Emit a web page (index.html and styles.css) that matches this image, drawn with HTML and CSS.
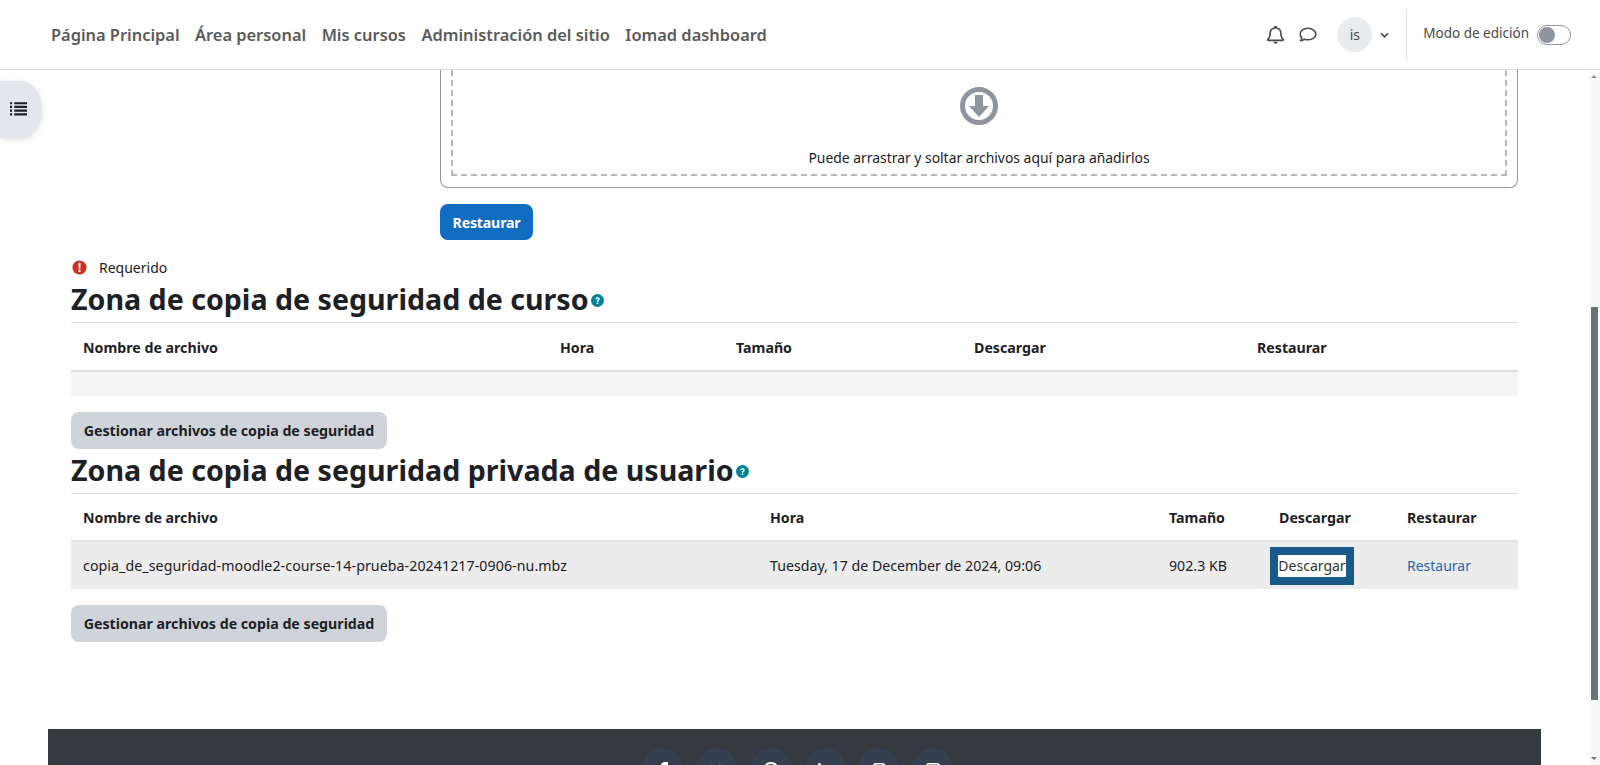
FILE: index.html
```html
<!DOCTYPE html>
<html lang="es">
<head>
    <meta charset="UTF-8">
    <meta name="viewport" content="width=device-width, initial-scale=1.0">
    <title>Restaurar curso</title>
    <link rel="stylesheet" href="styles.css">
</head>
<body>

    <header class="navbar">
        <nav class="primary-nav">
            <a href="#">Página Principal</a>
            <a href="#">Área personal</a>
            <a href="#">Mis cursos</a>
            <a href="#">Administración del sitio</a>
            <a href="#">Iomad dashboard</a>
        </nav>
        <div class="usernav">
            <svg class="nav-icon bell" viewBox="0 0 448 512"><path d="M224 40c-13 0-24 11-24 24v18C128 94 80 152 80 224c0 60-14 100-32 128-10 15-22 26-28 34-8 11-2 30 16 30h376c18 0 24-19 16-30-6-8-18-19-28-34-18-28-32-68-32-128 0-72-48-130-120-142V64c0-13-11-24-24-24z" fill="none" stroke="currentColor" stroke-width="44"/><path d="M168 448a56 56 0 0 0 112 0z" fill="currentColor"/></svg>
            <svg class="nav-icon chat" viewBox="0 0 512 512"><path d="M256 64C130 64 32 136 32 232c0 42 20 78 50 106-8 34-34 70-38 78 36-2 84-18 112-42 30 10 64 16 100 16 126 0 224-72 224-158S382 64 256 64z" fill="none" stroke="currentColor" stroke-width="44" stroke-linejoin="round"/></svg>
            <span class="avatar">is</span>
            <svg class="caret" viewBox="0 0 10 6"><path d="M1 1l4 4 4-4" fill="none" stroke="currentColor" stroke-width="1.8"/></svg>
            <span class="nav-divider"></span>
            <span class="edit-label">Modo de edición</span>
            <span class="switch"><span class="switch-knob"></span></span>
        </div>
    </header>

    <button class="drawer-toggle" aria-label="Índice">
        <svg viewBox="0 0 16 14"><path d="M0 1h2v2H0zM4 1h12v2H4zM0 4.500h2v2H0zM4 4.500h12v2H4zM0 8h2v2H0zM4 8h12v2H4zM0 11.500h2v2H0zM4 11.500h12v2H4z" fill="currentColor"/></svg>
    </button>

    <main class="page">
        <div class="filepicker-row">
            <div class="filepicker">
                <div class="dropzone">
                    <svg class="drop-icon" viewBox="0 0 40 40"><circle cx="20" cy="20" r="16.500" fill="none" stroke="currentColor" stroke-width="5"/><path d="M16 9h8v11h6L20 31 10 20h6z" fill="currentColor"/></svg>
                    <p>Puede arrastrar y soltar archivos aquí para añadirlos</p>
                </div>
            </div>
            <button class="btn btn-primary">Restaurar</button>
        </div>

        <div class="required-note">
            <svg class="req-icon" viewBox="0 0 16 16"><circle cx="8" cy="8" r="7.500" fill="currentColor"/><path d="M6.800 3h2.400l-.3 6.500H7.100zM6.900 10.500h2.200v2.300H6.900z" fill="#fff"/></svg>
            <span>Requerido</span>
        </div>

        <h2>Zona de copia de seguridad de curso<svg class="help" viewBox="0 0 16 16"><circle cx="8" cy="8" r="8" fill="currentColor"/><path d="M5.300 6.200C5.500 4.700 6.600 4 8.100 4c1.500 0 2.700.8 2.700 2.200 0 1.900-2 1.800-2 3.300H7.200c0-2.300 1.900-2.200 1.900-3.200 0-.5-.4-.9-1-.9s-1 .3-1.200 1zM7.100 10.500h1.800v1.700H7.100z" fill="#fff"/></svg></h2>
        <table class="backup-table course-zone">
            <thead>
                <tr><th>Nombre de archivo</th><th>Hora</th><th>Tamaño</th><th>Descargar</th><th>Restaurar</th></tr>
            </thead>
            <tbody>
                <tr class="empty-row"><td colspan="5"></td></tr>
            </tbody>
        </table>
        <button class="btn btn-secondary">Gestionar archivos de copia de seguridad</button>

        <h2>Zona de copia de seguridad privada de usuario<svg class="help" viewBox="0 0 16 16"><circle cx="8" cy="8" r="8" fill="currentColor"/><path d="M5.300 6.200C5.500 4.700 6.600 4 8.100 4c1.500 0 2.700.8 2.700 2.200 0 1.900-2 1.800-2 3.300H7.200c0-2.300 1.900-2.200 1.900-3.200 0-.5-.4-.9-1-.9s-1 .3-1.200 1zM7.100 10.500h1.800v1.700H7.100z" fill="#fff"/></svg></h2>
        <table class="backup-table user-zone">
            <thead>
                <tr><th>Nombre de archivo</th><th>Hora</th><th>Tamaño</th><th>Descargar</th><th>Restaurar</th></tr>
            </thead>
            <tbody>
                <tr>
                    <td class="file-name">copia_de_seguridad-moodle2-course-14-prueba-20241217-0906-nu.mbz</td>
                    <td>Tuesday, 17 de December de 2024, 09:06</td>
                    <td>902.3 KB</td>
                    <td><a href="#" class="focus-link">Descargar</a></td>
                    <td><a href="#" class="plain-link">Restaurar</a></td>
                </tr>
            </tbody>
        </table>
        <button class="btn btn-secondary">Gestionar archivos de copia de seguridad</button>
    </main>

    <footer class="site-footer">
        <span class="social"><svg viewBox="0 0 10 16"><path d="M3 16V9H0V6h3V4c0-3 2-4 4-4h3v3H8C7 3 6.500 3.500 6.500 4.500V6H10l-.5 3h-3v7z" fill="currentColor"/></svg></span>
        <span class="social"><svg viewBox="0 0 16 14"><path d="M16 2l-2 .6L15.500 1l-2 .8A3.300 3.300 0 0 0 8 4.500 9 9 0 0 1 1.200.8 3.300 3.300 0 0 0 2.200 5L.7 4.600c0 1.600 1.100 3 2.600 3.300l-1.500.1c.4 1.300 1.600 2.200 3 2.300A6.500 6.500 0 0 1 0 11.700 9.300 9.300 0 0 0 14.400 4z" fill="currentColor"/></svg></span>
        <span class="social"><svg viewBox="0 0 14 16"><path d="M7 0C3 0 0 2.500 0 6c0 2 1 3.500 2.500 4l.6-2C2.400 7.500 2.200 6.800 2.200 6c0-2.400 2-4 4.700-4 2.600 0 4.200 1.500 4.200 3.800 0 2.500-1.200 4.400-2.800 4.400-.9 0-1.600-.8-1.400-1.700l1-4H5.800L4 12l-.5 4h1.600L7 11.500c.5.600 1.300 1 2.200 1C12 12.500 14 9.500 14 6c0-3.500-3-6-7-6z" fill="currentColor"/></svg></span>
        <span class="social"><svg viewBox="0 0 14 14"><path d="M0 4.500h3V14H0zM1.500 0a1.700 1.700 0 1 1 0 3.400 1.700 1.700 0 0 1 0-3.400zM5 4.500h3V6c.6-1 1.700-1.700 3-1.700 2.300 0 3 1.500 3 4V14h-3V9c0-1.200-.3-2-1.400-2C8.400 7 8 8 8 9v5H5z" fill="currentColor"/></svg></span>
        <span class="social"><svg viewBox="0 0 14 14"><path d="M4 .8h6A3.200 3.200 0 0 1 13.200 4v6a3.200 3.200 0 0 1-3.200 3.200H4A3.200 3.200 0 0 1 .8 10V4A3.200 3.200 0 0 1 4 .8z" fill="none" stroke="currentColor" stroke-width="1.500"/></svg></span>
        <span class="social"><svg viewBox="0 0 14 14"><rect x=".8" y=".8" width="12.400" height="12.400" rx="2" fill="none" stroke="currentColor" stroke-width="1.500"/></svg></span>
    </footer>

    <div class="fake-scrollbar">
        <span class="arrow-up"></span>
        <span class="thumb"></span>
        <span class="arrow-down"></span>
    </div>

</body>
</html>
```

FILE: styles.css
```css
:root {
    --text: #1d2125;
    --nav-text: #5a5a5a;
    --primary: #0f6cbf;
    --secondary: #ced4da;
    --line: #dee2e6;
    --teal: #008196;
    --font-text: 'Noto Sans', 'Open Sans', sans-serif;
}

* { margin: 0; padding: 0; box-sizing: border-box; }

html, body {
    height: 100%;
    overflow: hidden;
}

body {
    position: relative;
    background: #fff;
    color: var(--text);
    font-family: var(--font-text);
    font-size: 14.2px;
    line-height: 21px;
}

a { text-decoration: none; }

/* barra superior */
.navbar {
    display: flex;
    align-items: center;
    justify-content: space-between;
    height: 70px;
    padding-left: 51px;
    padding-right: 29px;
    border-bottom: 1px solid #dcdcdc;
}

.primary-nav {
    display: flex;
    gap: 15.5px;
    font-size: 16.4px;
    font-weight: 600;
}

.primary-nav a { color: var(--nav-text); }

.usernav {
    display: flex;
    align-items: center;
    color: #4a4a4a;
}

.nav-icon {
    width: 17px;
    height: 19px;
    display: block;
}

.chat {
    margin-left: 15px;
    width: 18px;
    height: 18px;
}

.avatar {
    width: 35px;
    height: 35px;
    margin-left: 20px;
    border-radius: 50%;
    background: #e9ecef;
    text-align: center;
    line-height: 35px;
    font-size: 14px;
}

.caret {
    width: 9px;
    height: 6px;
    margin-left: 8px;
}

.nav-divider {
    width: 1px;
    height: 51px;
    margin-left: 17px;
    background: #dee2e6;
}

.edit-label {
    margin-left: 16px;
    font-size: 13.5px;
    position: relative;
    top: -1px;
}

.switch {
    width: 34px;
    height: 20px;
    margin-left: 8px;
    padding: 2px;
    border: 1px solid #8f959e;
    border-radius: 10px;
}

.switch-knob {
    display: block;
    width: 14px;
    height: 14px;
    border-radius: 50%;
    background: #8f959e;
    box-shadow: 0 0 0 1px #8f959e;
}

.drawer-toggle {
    position: absolute;
    top: 81px;
    left: 0;
    width: 42px;
    height: 57px;
    border: 0;
    border-radius: 0 50% 50% 0 / 0 50% 50% 0;
    background: #e3e6ea;
    box-shadow: 0 2px 6px rgba(0,0,0,0.12);
    color: #1d2125;
}

.drawer-toggle svg {
    display: block;
    width: 17px;
    height: 15px;
    margin-left: 10px;
    margin-top: -2px;
}

/* contenido */
.page {
    width: 1447px;
    margin-left: 71px;
}

.filepicker-row {
    padding-left: 369px;
    margin-bottom: 17px;
}

.filepicker {
    height: 118px;
    padding: 0 10px 11px;
    border: 1px solid #8f959e;
    border-top: 0;
    border-radius: 0 0 8px 8px;
}

.dropzone {
    height: 106px;
    border: 2px dashed #b8b8b8;
    border-top: 0;
    text-align: center;
}

.drop-icon {
    display: block;
    width: 40px;
    height: 40px;
    margin: 0 auto;
    position: relative;
    top: 16px;
    color: #8f959e;
}

.dropzone p {
    padding-top: 37px;
    font-size: 13.9px;
}

.btn {
    display: block;
    border: 0;
    border-radius: 8px;
    font-family: inherit;
    font-size: 14.2px;
    font-weight: 700;
}

.btn-primary {
    width: 93px;
    height: 36px;
    margin-top: 16px;
    background: var(--primary);
    color: #fff;
    letter-spacing: -0.2px;
}

.btn-secondary {
    width: 316px;
    height: 37px;
    background: var(--secondary);
    color: var(--text);
}

.required-note {
    display: flex;
    align-items: center;
    height: 21px;
    font-size: 14px;
    padding-left: 1px;
}

.req-icon {
    width: 15px;
    height: 15px;
    margin-right: 12px;
    color: #ca3120;
}

h2 {
    display: flex;
    align-items: flex-end;
    height: 36px;
    margin-top: 3px;
    margin-bottom: 5px;
    font-size: 28.6px;
    line-height: 36px;
    font-weight: 700;
    white-space: nowrap;
}

.help {
    width: 13px;
    height: 13px;
    margin-left: 2px;
    margin-bottom: 10px;
    color: var(--teal);
}

.backup-table {
    width: 100%;
    table-layout: fixed;
    border-collapse: collapse;
    margin-top: 1px;
    margin-bottom: 16px;
}

.backup-table th {
    height: 48px;
    padding: 2px 12px 0;
    border-top: 1px solid var(--line);
    border-bottom: 2px solid var(--line);
    text-align: left;
    font-weight: 700;
}

.backup-table td {
    height: 48px;
    padding: 0 12px;
    background: #ececec;
    white-space: nowrap;
}

.backup-table .file-name { letter-spacing: 0.07px; }

.backup-table .empty-row td {
    height: 25px;
    background: #f5f5f5;
}

.course-zone th:nth-child(1) { width: 477px; }
.course-zone th:nth-child(2) { width: 176px; }
.course-zone th:nth-child(3) { width: 238px; }
.course-zone th:nth-child(4) { width: 283px; }

.user-zone th:nth-child(1) { width: 687px; }
.user-zone th:nth-child(2) { width: 399px; }
.user-zone th:nth-child(3) { width: 110px; }
.user-zone th:nth-child(4) { width: 128px; }

.focus-link {
    display: inline-block;
    width: 68px;
    margin-left: -1px;
    background: #fff;
    color: #333;
    font-size: 14px;
    line-height: 22px;
    text-align: center;
    box-shadow: 0 0 0 8px #1a5a8a;
}

.plain-link {
    color: #1f6aa8;
    font-size: 14px;
}

/* pie */
.site-footer {
    display: flex;
    justify-content: center;
    gap: 14px;
    position: absolute;
    top: 729px;
    left: 48px;
    width: 1493px;
    height: 36px;
    padding-top: 19px;
    padding-left: 7px;
    overflow: hidden;
    background: #343a40;
}

.social {
    display: flex;
    justify-content: center;
    width: 40px;
    height: 40px;
    padding-top: 14px;
    border-radius: 50%;
    background: #343f4f;
    color: #fff;
}

.social svg {
    width: 14px;
    height: 16px;
}

/* barra de scroll */
.fake-scrollbar {
    position: absolute;
    top: 70px;
    right: 0;
    bottom: 0;
    width: 11px;
    background: #f8f9fa;
}

.thumb {
    position: absolute;
    top: 237px;
    left: 2px;
    width: 7px;
    height: 393px;
    background: #6a737b;
}

.arrow-up, .arrow-down {
    position: absolute;
    left: 2px;
    width: 0;
    height: 0;
    border-left: 3px solid transparent;
    border-right: 3px solid transparent;
}

.arrow-up {
    top: 5px;
    border-bottom: 3px solid #8a8f94;
}

.arrow-down {
    bottom: 5px;
    border-top: 3px solid #6a737b;
}
```
